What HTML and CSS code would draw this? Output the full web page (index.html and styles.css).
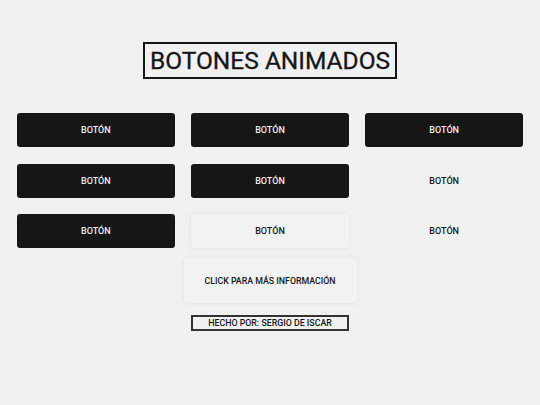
FILE: index.html
```html
<!DOCTYPE html>
<html lang="es">
<head>
  <meta charset="UTF-8">
  <title>Botones animados</title>
  <link rel="stylesheet" href="styles.css">
</head>
<body>

<header class="title-wrap">
  <h1 class="title">BOTONES ANIMADOS</h1>
</header>

<!-- grid de botones -->
<div class="grid">
  <button class="btn">BOTÓN</button>
  <button class="btn">BOTÓN</button>
  <button class="btn">BOTÓN</button>

  <button class="btn">BOTÓN</button>
  <button class="btn">BOTÓN</button>
  <button class="btn btn-ghost">BOTÓN</button>

  <button class="btn">BOTÓN</button>
  <button class="btn btn-soft">BOTÓN</button>
  <button class="btn btn-ghost">BOTÓN</button>
</div>

<div class="info-wrap">
  <button class="info">CLICK PARA MÁS INFORMACIÓN</button>
</div>

<footer class="credits">
  <div class="author">HECHO POR: SERGIO DE ISCAR</div>
</footer>

</body>
</html>
```

FILE: styles.css
```css
body {
  margin: 0;
  background: #f1f1f1;
  font-family: Roboto, "Liberation Sans", Arial, sans-serif;
  color: #161616;
}
.title-wrap {
  display: flex;
  justify-content: center;
  padding-top: 42px;
}
.title {
  margin: 0;
  border: 2px solid #161616;
  padding: 0 5px;
  height: 33px;
  line-height: 34px;
  font-size: 24.5px;
  font-weight: 400;
  -webkit-text-stroke: 0.3px #161616;
}
.grid {
  display: grid;
  grid-template-columns: repeat(3, 1fr);
  column-gap: 16.5px;
  row-gap: 16.5px;
  padding: 0 17px;
  margin-top: 34px;
}
.btn {
  height: 34px;
  border: none;
  border-radius: 3px;
  background: #161616;
  color: #f0f0f0;
  font-family: inherit;
  font-size: 9px;
  font-weight: 500;
  cursor: pointer;
  padding: 0;
}
.btn-ghost {
  background: transparent;
  color: #161616;
}
.btn-soft {
  background: #f2f2f2;
  color: #161616;
  box-shadow: 0 0 5px rgba(0, 0, 0, .05);
}
.info-wrap {
  display: flex;
  justify-content: center;
  margin-top: 10px;
}
.info {
  width: 173px;
  height: 45px;
  border: none;
  border-radius: 3px;
  background: #f2f2f2;
  box-shadow: 0 0 5px rgba(0, 0, 0, .05);
  color: #161616;
  font-family: inherit;
  font-size: 8.8px;
  font-weight: 500;
  padding: 0;
  cursor: pointer;
}
.credits {
  display: flex;
  justify-content: center;
  margin-top: 12px;
}
.author {
  width: 154px;
  height: 12px;
  line-height: 13px;
  border: 2px solid #333;
  text-align: center;
  font-size: 8.8px;
  font-weight: 500;
}
```
